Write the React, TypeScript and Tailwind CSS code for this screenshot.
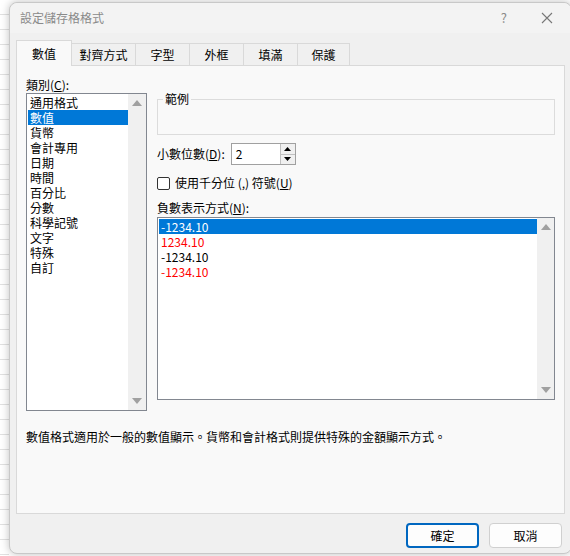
import React from "react";

const F = { fontFamily: '"Noto Sans CJK TC", "Liberation Sans", sans-serif' };

function Up() {
  return <svg width="10" height="6" viewBox="0 0 10 6"><path d="M0 6 L5 0 L10 6Z" fill="#a0a0a0" /></svg>;
}
function Down() {
  return <svg width="10" height="6" viewBox="0 0 10 6"><path d="M0 0 L5 6 L10 0Z" fill="#a0a0a0" /></svg>;
}

export default function App() {
  const cats = ["通用格式", "數值", "貨幣", "會計專用", "日期", "時間", "百分比", "分數", "科學記號", "文字", "特殊", "自訂"];
  const tabs = [["對齊方式", 64], ["字型", 54], ["外框", 54], ["填滿", 54], ["保護", 52]] as const;
  const neg = [
    ["-1234.10", "sel"],
    ["1234.10", "#ff0000"],
    ["-1234.10", "#000"],
    ["-1234.10", "#ff0000"],
  ];
  return (
    <div className="w-[570px] h-[556px] bg-white relative overflow-hidden text-[12px] text-black" style={F}>
      <div className="absolute left-0 top-0 w-[9px] h-full bg-[repeating-linear-gradient(to_bottom,#fff_0,#fff_14px,#e1e1e1_14px,#e1e1e1_15px)]" />
      <div className="absolute left-[9px] top-[2px] w-[563px] h-[552px] bg-[#f0f0f0] rounded-[8px] border border-[#c8c8c8] shadow-[0_0_8px_rgba(0,0,0,0.25)] flex flex-col">
        <div className="h-[30px] flex items-center pl-[10px] pr-[18px] bg-[#f3f3f3] rounded-t-[8px]">
          <span className="text-[12px] text-[#8a8a8a] flex-1">設定儲存格格式</span>
          <span className="text-[#8a8a8a] text-[13px] mr-[34px]">?</span>
          <svg width="12" height="12" viewBox="0 0 12 12"><path d="M1 1L11 11M11 1L1 11" stroke="#777" strokeWidth="1.1" /></svg>
        </div>
        <div className="flex items-end pl-[6px] h-[32px]">
          <div className="w-[56px] h-[26px] bg-[#f9f9f9] border border-b-0 border-[#d9d9d9] flex items-center justify-center relative top-[1px] z-10">數值</div>
          {tabs.map(([t, w]) => (
            <div key={t} style={{ width: w }} className="h-[22px] border border-b-0 border-l-0 border-[#d9d9d9] bg-[#f0f0f0] flex items-center justify-center">{t}</div>
          ))}
        </div>
        <div className="mx-[6px] h-[449px] bg-[#f9f9f9] border border-[#d9d9d9] relative flex flex-col px-[9px] pt-[10px]">
          <div className="flex gap-[10px]">
            <div className="w-[121px] flex flex-col">
              <div className="h-[17px] leading-[17px]">類別(<u>C</u>):</div>
              <div className="h-[318px] border border-[#828790] bg-white flex">
                <div className="flex-1 pt-[1px] pl-[1px]">
                  {cats.map((c, i) => (
                    <div key={c} className={"h-[15px] leading-[15px] pl-[2px] " + (i === 1 ? "bg-[#0078d7] text-white" : "")}>{c}</div>
                  ))}
                </div>
                <div className="w-[18px] bg-[#f0f0f0] flex flex-col justify-between items-center py-[6px]"><Up /><Down /></div>
              </div>
            </div>
            <div className="flex-1 flex flex-col pt-[23px]">
              <div className="h-[36px] border border-[#dcdcdc] relative">
                <span className="absolute -top-[9px] left-[5px] bg-[#f9f9f9] px-[2px] leading-[15px]">範例</span>
              </div>
              <div className="flex items-center mt-[8px] h-[22px]">
                <span>小數位數(<u>D</u>):</span>
                <div className="ml-[6px] w-[65px] h-[22px] border border-[#a0a0a0] bg-white flex">
                  <span className="flex-1 pl-[4px] leading-[20px]">2</span>
                  <div className="w-[15px] flex flex-col border-l border-[#c0c0c0]">
                    <div className="flex-1 flex items-center justify-center border-b border-[#c0c0c0] bg-[#f0f0f0]"><svg width="7" height="4" viewBox="0 0 7 4"><path d="M0 4L3.5 0L7 4Z" fill="#000" /></svg></div>
                    <div className="flex-1 flex items-center justify-center bg-[#f0f0f0]"><svg width="7" height="4" viewBox="0 0 7 4"><path d="M0 0L3.5 4L7 0Z" fill="#000" /></svg></div>
                  </div>
                </div>
              </div>
              <div className="flex items-center mt-[10px] h-[16px]">
                <div className="w-[13px] h-[13px] border border-[#333] rounded-[2px] bg-white mr-[5px]" />
                <span>使用千分位 (,) 符號(<u>U</u>)</span>
              </div>
              <div className="mt-[9px] h-[15px] leading-[15px]">負數表示方式(<u>N</u>):</div>
              <div className="mt-[2px] h-[183px] border border-[#828790] bg-white flex">
                <div className="flex-1 pt-[1px] pl-[1px]">
                  {neg.map(([t, c], i) => (
                    <div key={i} className="h-[15px] leading-[15px] pl-[2px]" style={c === "sel" ? { background: "#0078d7", color: "#fff" } : { color: c }}>{t}</div>
                  ))}
                </div>
                <div className="w-[17px] bg-[#f0f0f0] flex flex-col justify-between items-center py-[6px]"><Up /><Down /></div>
              </div>
            </div>
          </div>
          <div className="mt-[18px] leading-[15px]">數值格式適用於一般的數值顯示。貨幣和會計格式則提供特殊的金額顯示方式。</div>
        </div>
        <div className="flex justify-end gap-[10px] pr-[9px] mt-[9px]">
          <div className="w-[73px] h-[25px] border-2 border-[#0067c0] rounded-[4px] bg-[#fdfdfd] flex items-center justify-center">確定</div>
          <div className="w-[73px] h-[25px] border border-[#d0d0d0] rounded-[4px] bg-[#fdfdfd] flex items-center justify-center">取消</div>
        </div>
      </div>
    </div>
  );
}
